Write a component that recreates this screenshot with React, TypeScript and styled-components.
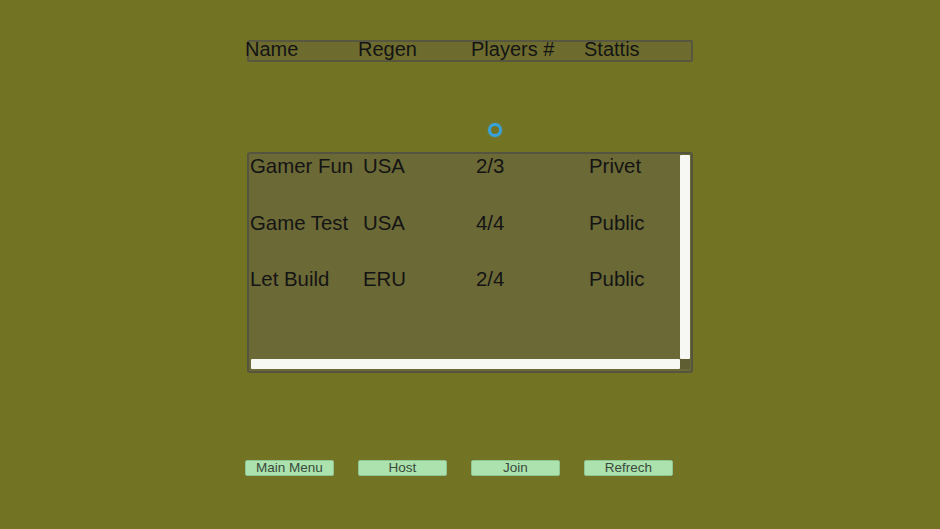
import React from "react";
import styled, { createGlobalStyle } from "styled-components";

const GlobalStyle = createGlobalStyle`
  html, body {
    margin: 0;
    padding: 0;
    background: #737324;
  }
  body {
    font-family: "Liberation Sans", Arial, sans-serif;
  }
`;

const servers = [
  { name: "Gamer Fun", region: "USA", players: "2/3", status: "Privet" },
  { name: "Game Test", region: "USA", players: "4/4", status: "Public" },
  { name: "Let Build", region: "ERU", players: "2/4", status: "Public" },
];

const App = (): JSX.Element => {
  return (
    <Screen>
      <GlobalStyle />
      <Column>
        <HeaderBar>
          <HeaderGrid>
            <HeadCell>Name</HeadCell>
            <HeadCell>Regen</HeadCell>
            <HeadCell>Players #</HeadCell>
            <HeadCell>Stattis</HeadCell>
          </HeaderGrid>
        </HeaderBar>

        <SpinnerRow>
          <Spinner />
        </SpinnerRow>

        <ListPanel>
          <ListBody>
            {servers.map((s) => (
              <Row key={s.name}>
                <Cell>{s.name}</Cell>
                <Cell>{s.region}</Cell>
                <Cell>{s.players}</Cell>
                <Cell>{s.status}</Cell>
              </Row>
            ))}
          </ListBody>
          <VScroll />
          <HScroll />
          <Corner />
        </ListPanel>

        <ButtonRow>
          <MenuButton>Main Menu</MenuButton>
          <MenuButton>Host</MenuButton>
          <MenuButton>Join</MenuButton>
          <MenuButton>Refrech</MenuButton>
        </ButtonRow>
      </Column>
    </Screen>
  );
};

export default App;

const Screen = styled.div`
  width: 940px;
  height: 529px;
  overflow: hidden;
  background: #737324;
  padding-top: 40px;
  box-sizing: border-box;
`;

const Column = styled.div`
  margin-left: 245px;
  width: 449px;
  display: flex;
  flex-direction: column;
`;

const HeaderBar = styled.div`
  margin-left: 2px;
  width: 446px;
  height: 22px;
  box-sizing: border-box;
  border: 2px solid #57573f;
  border-radius: 2px;
  background: #6d6c2e;
`;

const HeaderGrid = styled.div`
  display: grid;
  grid-template-columns: repeat(4, 113px);
  margin-left: -4px;
  margin-top: -2px;
`;

const HeadCell = styled.span`
  font-size: 20px;
  line-height: 18px;
  color: #141414;
  white-space: nowrap;
`;

const SpinnerRow = styled.div`
  height: 90px;
  padding-top: 61px;
  box-sizing: border-box;
`;

const Spinner = styled.div`
  margin-left: 243px;
  width: 14px;
  height: 14px;
  box-sizing: border-box;
  border-radius: 50%;
  border: 3px solid #36a3dc;
  box-shadow: 0 0 2px rgba(80, 180, 230, 0.5);
`;

const ListPanel = styled.div`
  margin-left: 2px;
  width: 446px;
  height: 221px;
  box-sizing: border-box;
  border: 2px solid #55553f;
  border-radius: 3px;
  background: #6b6936;
  padding: 1px 1px 2px 2px;
  display: grid;
  grid-template-columns: 1fr 10px;
  grid-template-rows: 1fr 10px;
`;

const ListBody = styled.div`
  margin-left: -1px;
  overflow: hidden;
`;

const Row = styled.div`
  display: grid;
  grid-template-columns: repeat(4, 113px);
  height: 56.5px;
`;

const Cell = styled.span`
  font-size: 20.4px;
  line-height: 22px;
  color: #141414;
  white-space: nowrap;
`;

const VScroll = styled.div`
  background: #f7f7f4;
  border-radius: 1px;
`;

const HScroll = styled.div`
  background: #f7f7f4;
  border-radius: 1px;
`;

const Corner = styled.div`
  background: #5f5e33;
`;

const ButtonRow = styled.div`
  margin-top: 87px;
  display: flex;
  gap: 24px;
`;

const MenuButton = styled.button`
  width: 89px;
  height: 16px;
  padding: 0;
  box-sizing: border-box;
  border: 1px solid #8fc493;
  border-radius: 2px;
  background: #abe2ad;
  color: #3a4a3c;
  font-family: "Liberation Sans", Arial, sans-serif;
  font-size: 13.5px;
  line-height: 14px;
`;
